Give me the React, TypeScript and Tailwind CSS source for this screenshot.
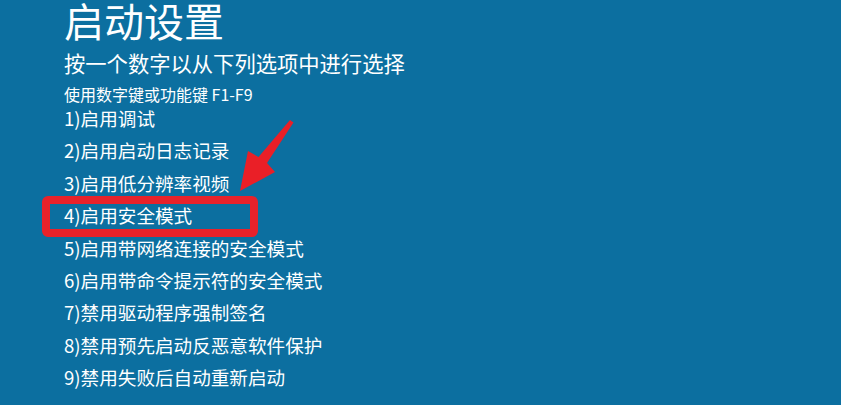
const items = [
  '1)启用调试',
  '2)启用启动日志记录',
  '3)启用低分辨率视频',
  '4)启用安全模式',
  '5)启用带网络连接的安全模式',
  '6)启用带命令提示符的安全模式',
  '7)禁用驱动程序强制签名',
  '8)禁用预先启动反恶意软件保护',
  '9)禁用失败后自动重新启动',
];

function Arrow() {
  return (
    <svg
      className="absolute left-0 top-0 pointer-events-none"
      width="841"
      height="405"
      viewBox="0 0 841 405"
    >
      <polygon
        points="290,120 293.5,122.5 267,163 275,172 240,191 248,151 258.5,157"
        fill="#ea1f27"
      />
    </svg>
  );
}

export default function App() {
  return (
    <div
      className="relative w-[841px] h-[405px] overflow-hidden bg-[#0c6fa0] text-white"
      style={{ fontFamily: '"Noto Sans CJK SC", "Noto Sans", sans-serif' }}
    >
      <div className="flex flex-col pl-[64px]">
        <h1 className="text-[40px] leading-[40px] font-normal">启动设置</h1>
        <p className="text-[21.3px] leading-[26px] mt-[10px]">按一个数字以从下列选项中进行选择</p>
        <p className="text-[16px] leading-[20px] mt-[8px]">使用数字键或功能键 F1-F9</p>
        <ul className="flex flex-col">
          {items.map((item, i) => (
            <li key={item} className="relative h-[32.4px] text-[18.6px] leading-[28px]">
              {item}
              {i === 3 && (
                <span className="absolute -left-[22px] -top-[5px] w-[216px] h-[41px] border-[8px] border-[#e8222a] rounded-[6px]" />
              )}
            </li>
          ))}
        </ul>
      </div>
      <Arrow />
    </div>
  );
}
